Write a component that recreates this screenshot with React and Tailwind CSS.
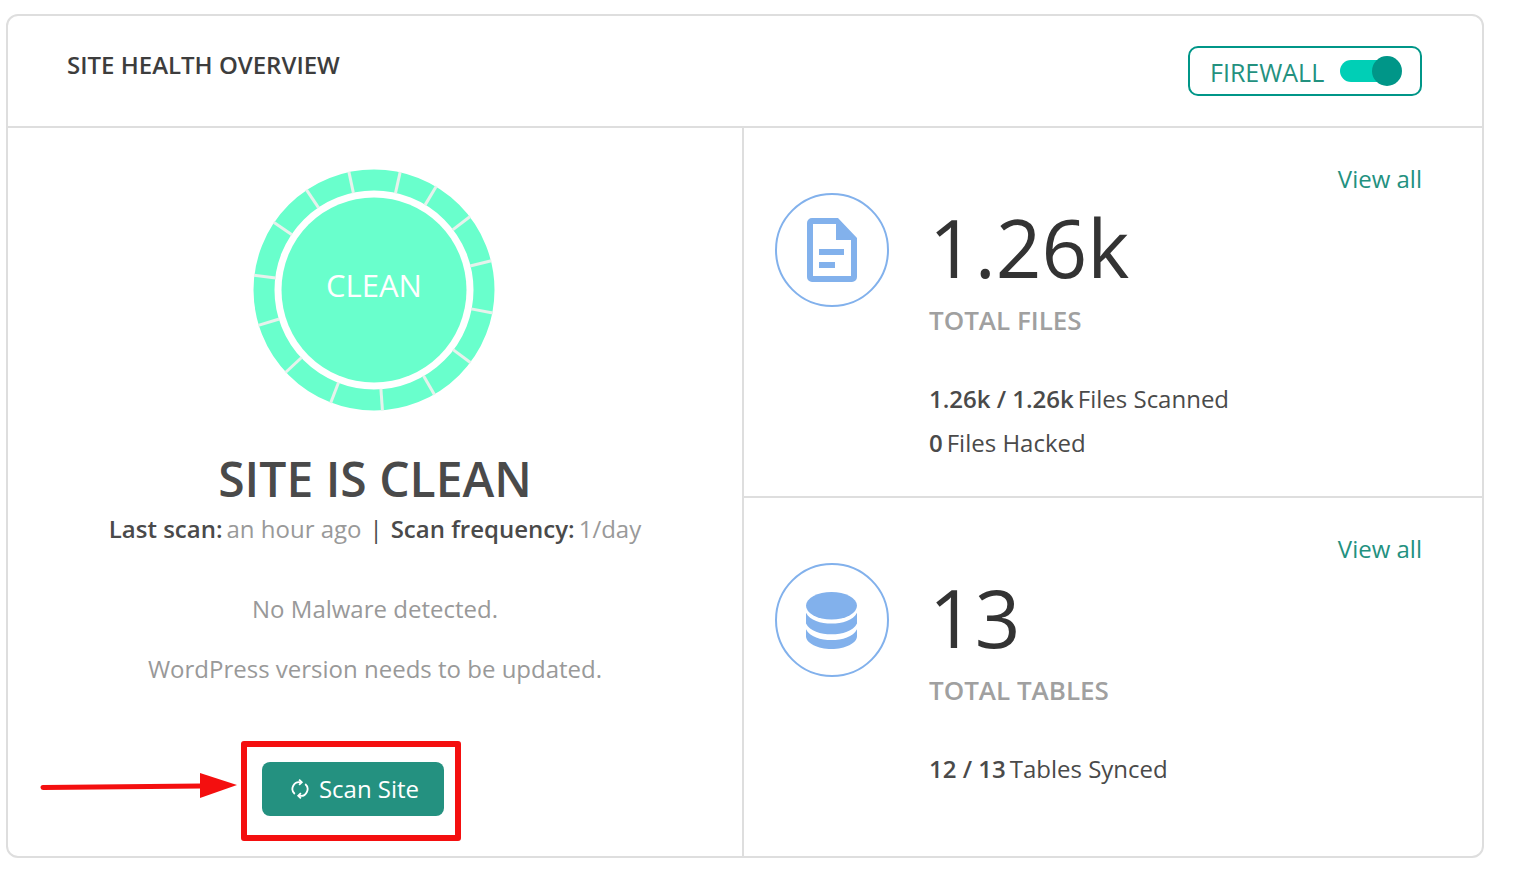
const separators = [-12, 12.5, 31, 52.6, 76, 101, 127, 150, 176, 201, 227, 253, 277, 304, 326];

function HealthRing() {
  return (
    <div className="relative mr-[2px] w-[244px] h-[244px] flex items-center justify-center">
      <svg viewBox="0 0 244 244" className="absolute inset-0 w-full h-full">
        <circle cx="122" cy="122" r="110" fill="none" stroke="#69ffcc" strokeWidth="21" />
        <circle cx="122" cy="122" r="92.5" fill="#69ffcc" />
        {separators.map((deg) => (
          <line
            key={deg}
            x1="122"
            y1="23"
            x2="122"
            y2="1"
            stroke="#e6f2ec"
            strokeWidth="3"
            transform={`rotate(${deg} 122 122)`}
          />
        ))}
      </svg>
      <span className="relative mb-[9px] text-[31px] text-white">CLEAN</span>
    </div>
  );
}

function FileIcon() {
  return (
    <svg viewBox="0 0 50 64" className="w-[50px] h-[64px]" fill="#82b1ec">
      <path
        fillRule="evenodd"
        d="M5 0h26l19 20v39a5 5 0 0 1-5 5H5a5 5 0 0 1-5-5V5a5 5 0 0 1 5-5zM6 6v52h38V22H29V6zM12 31h25v6H12zM12 44h16v6H12z"
      />
    </svg>
  );
}

function DatabaseIcon() {
  return (
    <svg viewBox="0 0 52 58" className="w-[51px] h-[57px] mr-[2px]" fill="#82b1ec">
      <ellipse cx="26" cy="14" rx="26" ry="14" />
      <path d="M0 21c4 8 15 11 26 11s22-3 26-11v11c-4 8-15 11-26 11S4 40 0 32z" />
      <path d="M0 38c4 8 15 11 26 11s22-3 26-11v7c0 7-12 13-26 13S0 52 0 45z" />
    </svg>
  );
}

function SyncIcon() {
  return (
    <svg viewBox="0 0 20 24" className="w-[18px] h-[22px]" fill="none" stroke="#fff" strokeWidth="2">
      <path d="M4.2 17.5A7.5 7.5 0 0 1 11 4.6" />
      <path d="M15.8 6.5A7.5 7.5 0 0 1 9 19.4" />
      <path d="M9 1.5l3 3-3 3" />
      <path d="M11 16.5l-3 3 3 3" />
    </svg>
  );
}

function StatRow({ icon, value, label, lines, className }) {
  return (
    <div className={`relative flex pl-[31px] ${className}`}>
      <a className="absolute right-[60px] top-[35px] text-[24px] leading-[32px] text-[#23917f]">View all</a>
      <div className="w-[114px] h-[114px] mt-[65px] rounded-full border-2 border-[#82b1ec] flex items-center justify-center shrink-0">
        {icon}
      </div>
      <div className="ml-[40px] pt-[67px]">
        <div className="text-[80px] leading-[104px] text-[#333]">{value}</div>
        <div className="mt-[4px] text-[26px] leading-[34px] font-semibold text-[#a0a0a0]">{label}</div>
        <div className="mt-[46px] flex flex-col gap-[12px]">
          {lines.map(([bold, rest]) => (
            <p key={rest} className="text-[24px] leading-[32px] text-[#4a4a4a]">
              <span className="font-semibold">{bold}</span>
              <span className="ml-[4px]">{rest}</span>
            </p>
          ))}
        </div>
      </div>
    </div>
  );
}

export default function App() {
  return (
    <div className="min-h-screen bg-white pt-[14px] pl-[6px] font-['Open_Sans',sans-serif]">
      <div className="relative w-[1478px] h-[844px] border-2 border-[#dedede] rounded-[12px] flex flex-col">
        {/* Header */}
        <header className="h-[112px] shrink-0 border-b-2 border-[#dedede] flex justify-between pl-[59px] pr-[60px]">
          <h1 className="mt-[33px] text-[24px] leading-[32px] font-semibold text-[#3d3d3d]">SITE HEALTH OVERVIEW</h1>
          <div className="mt-[30px] w-[234px] h-[50px] rounded-[10px] border-2 border-[#009688] flex items-center pl-[20px]">
            <span className="mt-[3px] text-[25px] font-medium text-[#23917f]">FIREWALL</span>
            <span className="relative ml-[16px] w-[50px] h-[22px] rounded-full bg-[#00cfb6]">
              <span className="absolute right-[-12px] top-[-4px] w-[30px] h-[30px] rounded-full bg-[#009688]" />
            </span>
          </div>
        </header>

        <div className="flex flex-1 min-h-0">
          {/* Left column */}
          <section className="w-[736px] shrink-0 border-r-2 border-[#dedede] flex flex-col items-center pt-[40px]">
            <HealthRing />
            <h2 className="mt-[35px] text-[48px] leading-[64px] font-semibold text-[#4a4a4a]">SITE IS CLEAN</h2>
            <p className="text-[24px] leading-[36px] text-[#999]">
              <span className="font-semibold text-[#4a4a4a]">Last scan:</span>
              <span className="ml-[4px]">an hour ago</span>
              <span className="text-[#4a4a4a] mx-[8px]">|</span>
              <span className="font-semibold text-[#4a4a4a]">Scan frequency:</span>
              <span className="ml-[4px]">1/day</span>
            </p>
            <p className="mt-[46px] text-[24px] leading-[32px] text-[#999]">No Malware detected.</p>
            <p className="mt-[28px] text-[24px] leading-[32px] text-[#999]">WordPress version needs to be updated.</p>
            <div className="relative self-start ml-[254px] mt-[77px]">
              <button className="w-[182px] h-[54px] pl-[4px] rounded-[8px] bg-[#249180] flex items-center justify-center gap-[10px] text-[24px] text-white">
                <SyncIcon />
                Scan Site
              </button>
              {/* red annotation */}
              <div className="absolute left-[-21px] top-[-21px] w-[220px] h-[100px] border-[6px] border-[#f40f0f] rounded-[3px]" />
              <svg viewBox="0 0 200 40" className="absolute left-[-222px] top-[4px] w-[200px] h-[40px]">
                <path d="M3 21.5 L162 20" stroke="#f40f0f" strokeWidth="5" strokeLinecap="round" />
                <path d="M160 7 L197 19 L160 32z" fill="#f40f0f" />
              </svg>
            </div>
          </section>

          {/* Right column */}
          <section className="flex-1 flex flex-col">
            <StatRow
              className="h-[370px] border-b-2 border-[#dedede] shrink-0"
              icon={<FileIcon />}
              value="1.26k"
              label="TOTAL FILES"
              lines={[
                ['1.26k / 1.26k', 'Files Scanned'],
                ['0', 'Files Hacked'],
              ]}
            />
            <StatRow
              className="flex-1"
              icon={<DatabaseIcon />}
              value="13"
              label="TOTAL TABLES"
              lines={[['12 / 13', 'Tables Synced']]}
            />
          </section>
        </div>
      </div>
    </div>
  );
}
